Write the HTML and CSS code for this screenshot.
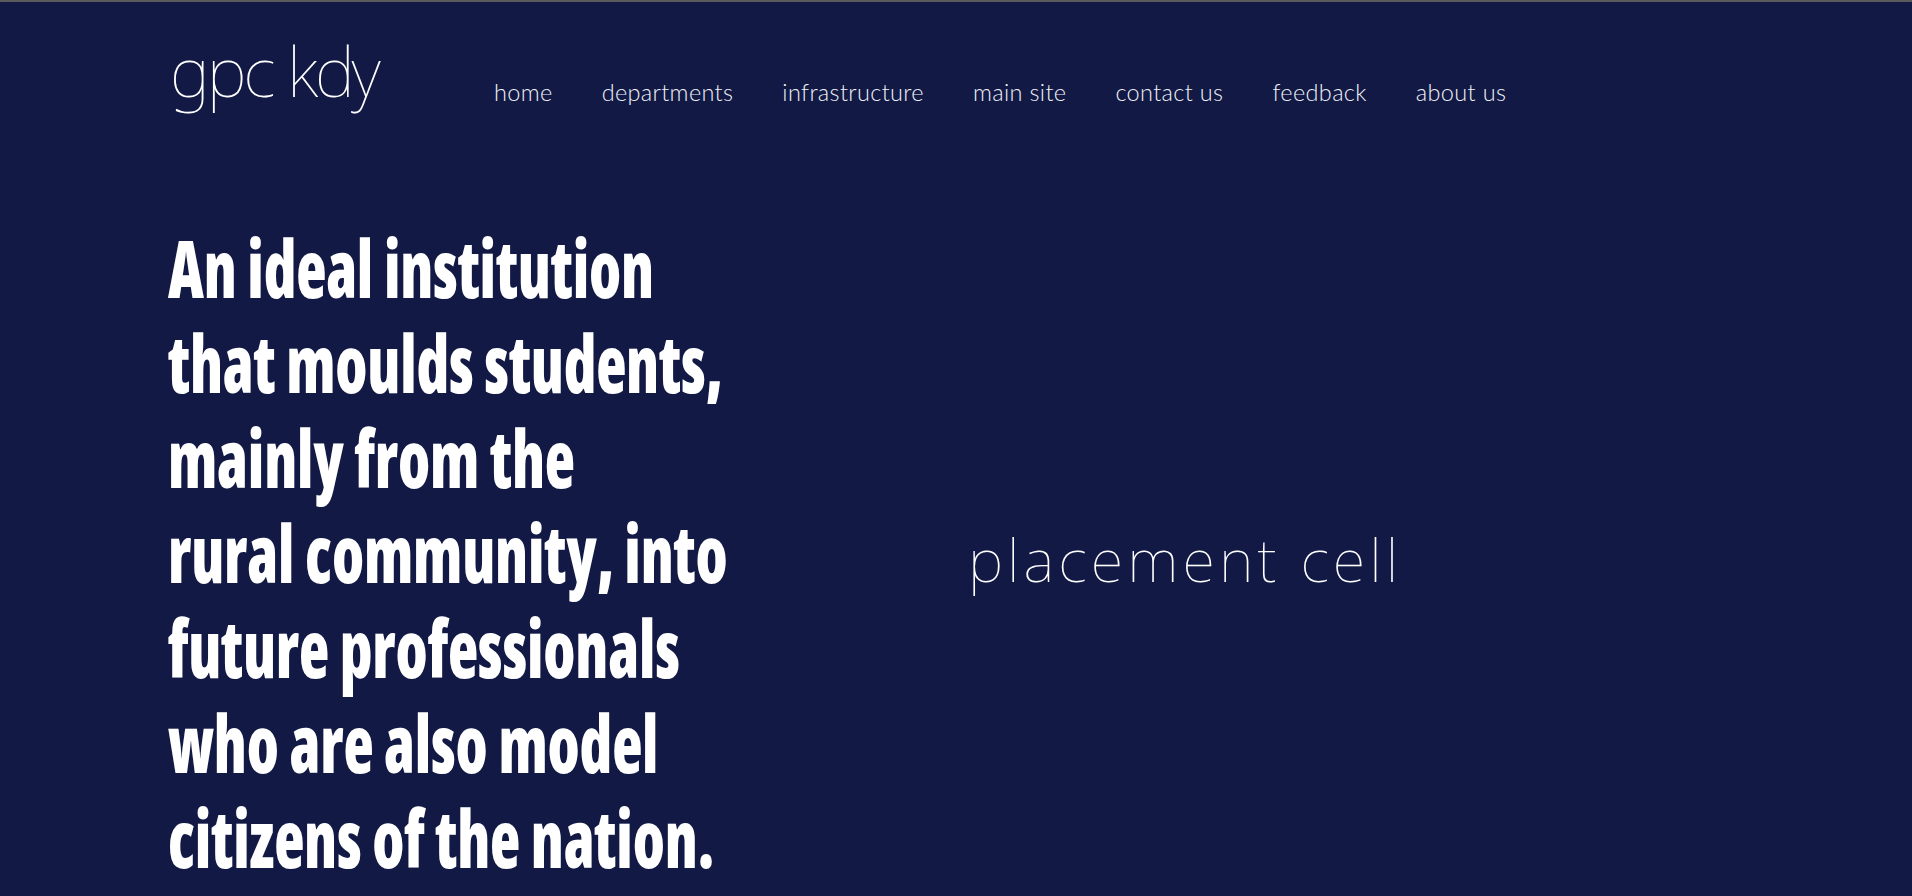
FILE: index.html
```html
<!DOCTYPE html>
<html lang="en">
<head>
<meta charset="utf-8">
<title>gpc kdy</title>
<link rel="stylesheet" href="styles.css">
</head>
<body>
<div class="page">
  <header class="header">
    <div class="logo">gpc kdy</div>
    <nav class="nav">
      <a href="#">home</a>
      <a href="#">departments</a>
      <a href="#">infrastructure</a>
      <a href="#">main site</a>
      <a href="#">contact us</a>
      <a href="#">feedback</a>
      <a href="#">about us</a>
    </nav>
  </header>
  <section class="hero">
    <h1 class="headline">
      <span class="line"><span class="txt">An ideal institution</span></span>
      <span class="line"><span class="txt">that moulds students,</span></span>
      <span class="line"><span class="txt">mainly from the</span></span>
      <span class="line"><span class="txt">rural community, into</span></span>
      <span class="line"><span class="txt">future professionals</span></span>
      <span class="line"><span class="txt">who are also model</span></span>
      <span class="line"><span class="txt">citizens of the nation.</span></span>
    </h1>
    <div class="side">
      <h2 class="placement">placement cell</h2>
    </div>
  </section>
  <section class="more"></section>
</div>
</body>
</html>
```
FILE: styles.css
```css
html, body {
  margin: 0;
  padding: 0;
  background: #111944;
}
body {
  border-top: 2px solid #5a5a5a;
  color: #fff;
}
.page {
  padding: 0 168px;
}
.header {
  display: flex;
  align-items: flex-start;
  padding-top: 29px;
}
.logo {
  flex: 0 0 326px;
  font-family: "Noto Sans", sans-serif;
  font-weight: 100;
  font-size: 68px;
  line-height: 80px;
  letter-spacing: -3px;
  margin-left: 2px;
  margin-right: -2px;
}
.nav {
  display: flex;
  gap: 49px;
  padding-top: 46px;
}
.nav a {
  font-family: Lato, sans-serif;
  font-weight: 300;
  font-size: 23.5px;
  line-height: 30px;
  letter-spacing: 0.35px;
  color: #f0f1f8;
  text-decoration: none;
}
.hero {
  display: flex;
  align-items: center;
  padding-top: 108px;
}
.headline {
  flex: 0 0 800px;
  margin: 0;
  font-family: "Open Sans", sans-serif;
  font-stretch: 75%;
  font-weight: 800;
  font-size: 62.5px;
  letter-spacing: -0.2px;
  color: #fff;
}
.line {
  display: flex;
  align-items: center;
  height: 95px;
  white-space: nowrap;
}
.txt {
  display: inline-block;
  line-height: 56px;
  transform: scaleY(1.28);
  transform-origin: left center;
}
.side {
  flex: 1;
  padding-top: 14px;
}
.placement {
  margin: 0;
  font-family: "Noto Sans", sans-serif;
  font-weight: 100;
  font-size: 60px;
  line-height: 80px;
  letter-spacing: 4.1px;
  color: #fff;
}
.more {
  min-height: 6700px;
}
```
